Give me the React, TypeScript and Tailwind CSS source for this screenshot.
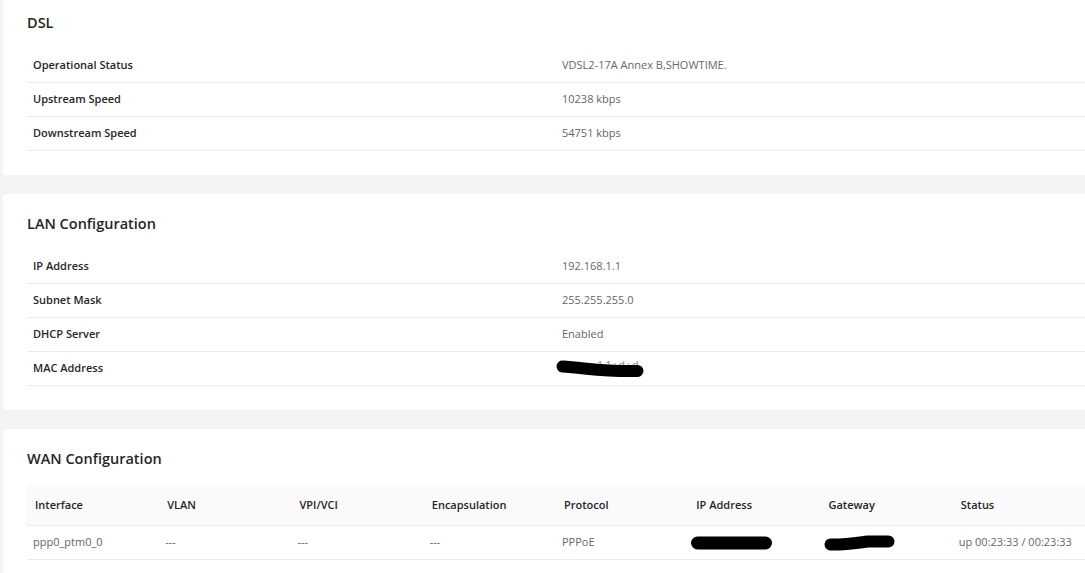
import React from "react";

const font = { fontFamily: '"Open Sans", "Noto Sans", sans-serif' };

type Row = { label: string; value: React.ReactNode };

const dslRows: Row[] = [
  { label: "Operational Status", value: "VDSL2-17A Annex B,SHOWTIME." },
  { label: "Upstream Speed", value: "10238 kbps" },
  { label: "Downstream Speed", value: "54751 kbps" },
];

// hand-drawn redaction marks
const Scribble: React.FC<{ w: number; h: number; d: string; sw: number }> = ({ w, h, d, sw }) => (
  <svg width={w} height={h} viewBox={`0 0 ${w} ${h}`} className="block">
    <path d={d} stroke="#000" strokeWidth={sw} strokeLinecap="round" strokeLinejoin="round" fill="none" />
  </svg>
);

const lanRows: Row[] = [
  { label: "IP Address", value: "192.168.1.1" },
  { label: "Subnet Mask", value: "255.255.255.0" },
  { label: "DHCP Server", value: "Enabled" },
  {
    label: "MAC Address",
    value: (
      <span className="relative block h-[16px] w-[90px]">
        <span className="absolute left-[30px] -top-[4px] text-[#8a8a8a] tracking-[2px]">:11:d:d</span>
        <span className="absolute -left-[6px] -top-[1px]">
          <Scribble w={88} h={20} sw={12} d="M6.5 6.5 C 30 8, 50 12, 81.5 11" />
        </span>
      </span>
    ),
  },
];

const KvCard: React.FC<{ title: string; rows: Row[]; className?: string }> = ({ title, rows, className }) => (
  <div className={`bg-white rounded-[4px] w-[1106px] pt-[18px] pb-[24px] px-[24px] ${className ?? ""}`}>
    <h2 className="text-[14.5px] leading-[24px] font-semibold text-[#262626] mb-[14px]">{title}</h2>
    <div className="w-[1058px]">
      {rows.map((r) => (
        <div key={r.label} className="grid grid-cols-2 h-[34px] items-center border-b border-[#ececec] text-[11px]">
          <div className="pl-[6px] font-semibold text-[#262626]">{r.label}</div>
          <div className="pl-[6px] text-[#666]">{r.value}</div>
        </div>
      ))}
    </div>
  </div>
);

const wanHead = ["Interface", "VLAN", "VPI/VCI", "Encapsulation", "Protocol", "IP Address", "Gateway", "Status"];

export default function App() {
  return (
    <div className="w-[1085px] h-[573px] overflow-hidden bg-[#f4f4f4]" style={font}>
      <div className="pl-[3px] -mt-[7px] flex flex-col gap-[19px]">
        <KvCard title="DSL" rows={dslRows} />
        <KvCard title="LAN Configuration" rows={lanRows} />
        <div className="bg-white rounded-[4px] w-[1106px] pt-[18px] pb-[24px] px-[24px]">
          <h2 className="text-[14.5px] leading-[24px] font-semibold text-[#262626] mb-[14px]">WAN Configuration</h2>
          <div className="w-[1058px] text-[11px]">
            <div className="grid grid-cols-8 h-[41px] items-center bg-[#fafafa] border-b border-[#ececec]">
              {wanHead.map((h) => (
                <div key={h} className="pl-[8px] font-semibold text-[#262626]">{h}</div>
              ))}
            </div>
            <div className="grid grid-cols-8 h-[34px] items-center border-b border-[#ececec] text-[#666]">
              <div className="pl-[6px]">ppp0_ptm0_0</div>
              <div className="pl-[6px]">---</div>
              <div className="pl-[6px]">---</div>
              <div className="pl-[6px]">---</div>
              <div className="pl-[6px]">PPPoE</div>
              <div className="pl-[3px]">
                <Scribble w={81} h={14} sw={13} d="M6.5 7 L 74.5 7" />
              </div>
              <div className="pl-[3px]">
                <Scribble w={71} h={16} sw={12} d="M6.5 9.5 C 20 10, 32 8, 44 6.5 L 64.5 6.5" />
              </div>
              <div className="pl-[6px]">up 00:23:33 / 00:23:33</div>
            </div>
          </div>
        </div>
      </div>
    </div>
  );
}
